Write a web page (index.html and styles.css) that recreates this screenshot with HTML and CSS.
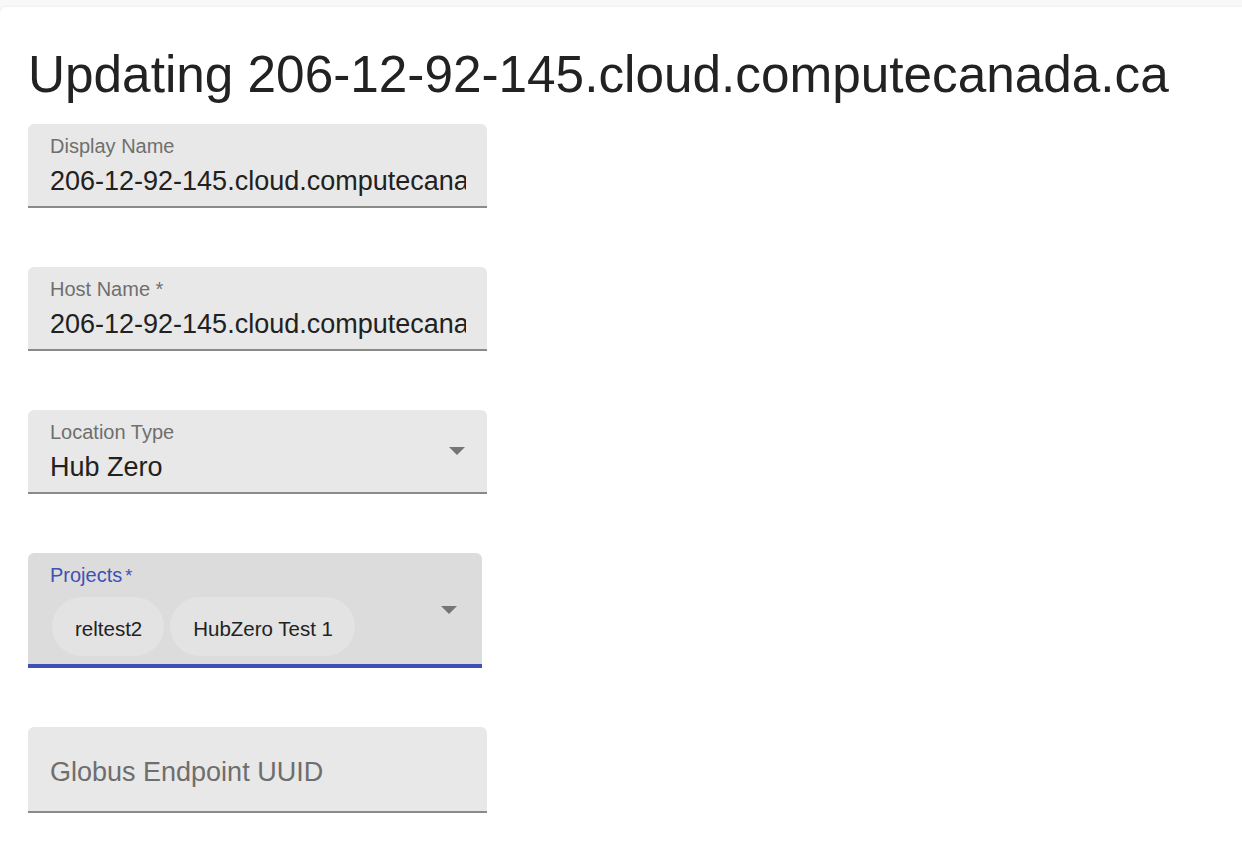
FILE: index.html
```html
<!DOCTYPE html>
<html>
<head>
<meta charset="utf-8">
<link rel="stylesheet" href="styles.css">
</head>
<body>
<div class="card">
  <h1 class="title">Updating 206-12-92-145.cloud.computecanada.ca</h1>
  <div class="form">
    <div class="field">
      <div class="label">Display Name</div>
      <div class="value">206-12-92-145.cloud.computecanada.ca</div>
    </div>
    <div class="field">
      <div class="label">Host Name *</div>
      <div class="value">206-12-92-145.cloud.computecanada.ca</div>
    </div>
    <div class="field select">
      <div class="label">Location Type</div>
      <div class="value">Hub Zero</div>
      <svg class="arrow" viewBox="0 0 16 8" width="16" height="8"><path d="M0 0h16L8 8z" fill="#757575"/></svg>
    </div>
    <div class="field select focused">
      <div class="label">Projects<span class="req">*</span></div>
      <div class="chips">
        <span class="chip">reltest2</span>
        <span class="chip">HubZero Test 1</span>
      </div>
      <svg class="arrow" viewBox="0 0 16 8" width="16" height="8"><path d="M0 0h16L8 8z" fill="#757575"/></svg>
    </div>
    <div class="field empty">
      <div class="placeholder">Globus Endpoint UUID</div>
    </div>
  </div>
</div>
</body>
</html>
```

FILE: styles.css
```css
html, body {
  margin: 0;
  padding: 0;
  background: #f8f8f8;
  font-family: "Liberation Sans", Arial, sans-serif;
  color: rgba(0,0,0,0.87);
}
.card {
  margin-top: 7px;
  background: #ffffff;
  border-top-left-radius: 6px;
  box-shadow: 0 0 3px rgba(0,0,0,0.08);
  padding: 38px 0 40px 28px;
  min-height: 800px;
  box-sizing: border-box;
}
.title {
  margin: 0;
  font-weight: 400;
  font-size: 51.3px;
  line-height: 60px;
  color: #222;
}
.form {
  margin-top: 19px;
  display: flex;
  flex-direction: column;
  gap: 59px;
}
.field {
  position: relative;
  width: 459px;
  height: 84px;
  box-sizing: border-box;
  background: #e8e8e8;
  border-top-left-radius: 6px;
  border-top-right-radius: 6px;
  border-bottom: 2px solid #8a8a8a;
  padding: 10px 21px 0 22px;
}
.label {
  font-size: 20px;
  line-height: 24px;
  color: #6f6f6f;
}
.value {
  margin-top: 6px;
  font-size: 27px;
  line-height: 34px;
  color: #212121;
  white-space: nowrap;
  overflow: hidden;
}
.arrow {
  position: absolute;
  right: 22px;
  top: 37px;
}
.field.focused {
  width: 454px;
  height: 115px;
  background: #dcdcdc;
  border-bottom: 4px solid #3f51b5;
}
.field.focused .label {
  color: #3f51b5;
}
.req {
  margin-left: 3px;
  font-size: 18px;
}
.field.focused .arrow {
  top: 53px;
  right: 25px;
}
.chips {
  display: flex;
  gap: 6px;
  margin-top: 9px;
  margin-left: 2px;
}
.chip {
  height: 59px;
  border-radius: 30px;
  background: #e3e3e3;
  padding: 0 22px 0 23px;
  display: inline-flex;
  align-items: center;
  font-size: 20.5px;
  padding-top: 4px;
  box-sizing: border-box;
  color: #222;
}
.field.empty {
  height: 86px;
  display: flex;
  align-items: center;
  padding-top: 6px;
}
.placeholder {
  font-size: 27px;
  color: #6e6e6e;
}
```
